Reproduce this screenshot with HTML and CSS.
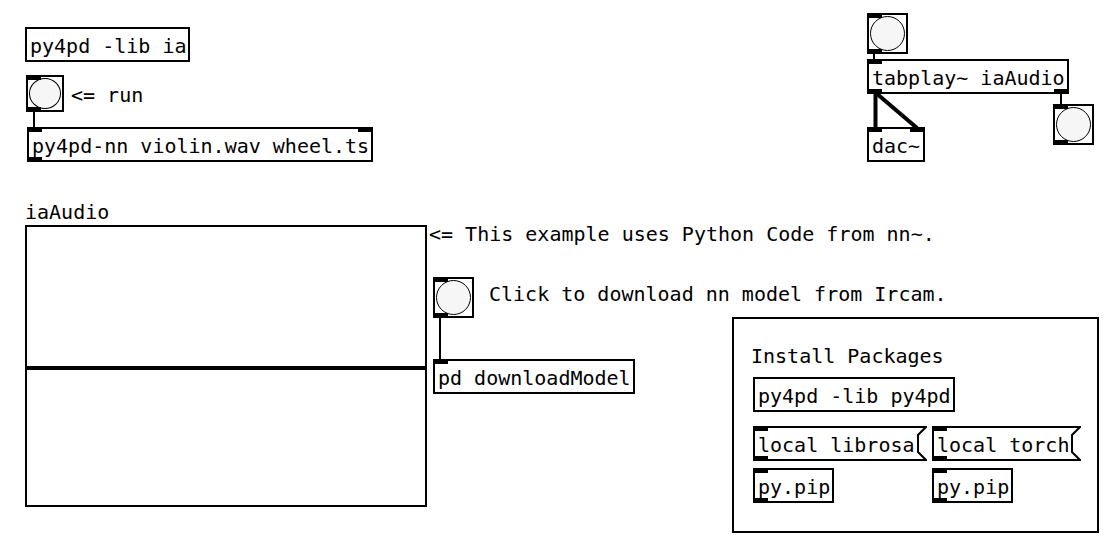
FILE: index.html
```html
<!DOCTYPE html>
<html>
<head>
<meta charset="utf-8">
<link rel="stylesheet" href="styles.css">
</head>
<body>
<div class="patch">
  <svg class="wires" width="1106" height="539" viewBox="0 0 1106 539">
    <line class="w" x1="34" y1="111" x2="34" y2="128"/>
    <line class="w" x1="440" y1="316" x2="440" y2="360"/>
    <line class="w" x1="874" y1="53" x2="874" y2="60"/>
    <line class="sig" x1="875.5" y1="92" x2="875.5" y2="128"/>
    <line class="sig" x1="876" y1="93" x2="917" y2="128"/>
    <line class="w" x1="1061" y1="92" x2="1061" y2="105"/>
    <line class="w" x1="760" y1="459" x2="760" y2="469"/>
    <line class="w" x1="939" y1="459" x2="939" y2="469"/>
  </svg>

  <div class="obj n-lib-ia">py4pd -lib ia</div>

  <div class="bng n-bng-run"><span class="io in-l"></span><span class="ball"></span><span class="io out-l"></span></div>
  <div class="cmt n-cmt-run">&lt;= run</div>

  <div class="obj n-nn"><span class="io in-l"></span><span class="io in-r"></span>py4pd-nn violin.wav wheel.ts<span class="io out-l"></span></div>

  <div class="cmt n-label">iaAudio</div>
  <div class="graph n-graph"><div class="zero"></div></div>

  <div class="cmt n-cmt-nn">&lt;= This example uses Python Code from nn~.</div>

  <div class="bng n-bng-dl"><span class="io in-l"></span><span class="ball"></span><span class="io out-l"></span></div>
  <div class="cmt n-cmt-dl">Click to download nn model from Ircam.</div>
  <div class="obj n-dl"><span class="io in-l"></span>pd downloadModel</div>

  <div class="bng n-bng-play"><span class="io in-l"></span><span class="ball"></span><span class="io out-l"></span></div>
  <div class="obj n-tabplay"><span class="io in-l"></span>tabplay~ iaAudio<span class="io out-l"></span><span class="io out-r"></span></div>
  <div class="obj n-dac"><span class="io in-l"></span><span class="io in-r"></span>dac~</div>
  <div class="bng n-bng-end"><span class="io in-l"></span><span class="ball"></span><span class="io out-l"></span></div>

  <div class="cnv n-cnv"></div>
  <div class="cmt n-cmt-install">Install Packages</div>
  <div class="obj n-lib-py4pd">py4pd -lib py4pd</div>

  <div class="msg n-msg-librosa"><svg class="flag" width="174" height="35" viewBox="0 0 174 35"><polygon points="1,1 173,1 165,9 165,26 173,34 1,34"/></svg><span class="io in-l"></span><span class="label">local librosa</span><span class="io out-l"></span></div>
  <div class="msg n-msg-torch"><svg class="flag" width="149" height="35" viewBox="0 0 149 35"><polygon points="1,1 148,1 140,9 140,26 148,34 1,34"/></svg><span class="io in-l"></span><span class="label">local torch</span><span class="io out-l"></span></div>

  <div class="obj n-pip1"><span class="io in-l"></span>py.pip<span class="io out-l"></span></div>
  <div class="obj n-pip2"><span class="io in-l"></span>py.pip<span class="io out-l"></span></div>
</div>
</body>
</html>
```

FILE: styles.css
```css
html, body {
  margin: 0;
  padding: 0;
  background: #fff;
}

.patch {
  position: relative;
  width: 1106px;
  height: 539px;
  overflow: hidden;
  background: #fff;
  font-family: "DejaVu Sans Mono", monospace;
  font-size: 20px;
  line-height: 24px;
  color: #000;
}

.wires {
  position: absolute;
  left: 0;
  top: 0;
}

.w {
  stroke: #000;
  stroke-width: 2;
}

.sig {
  stroke: #000;
  stroke-width: 4;
}

/* object box */
.obj {
  position: absolute;
  box-sizing: border-box;
  height: 35px;
  border: 2px solid #000;
  padding: 5px 0 0 3px;
  background: #fff;
  white-space: pre;
}

/* message box */
.msg {
  position: absolute;
  box-sizing: border-box;
  height: 35px;
  padding: 7px 0 0 5px;
  white-space: nowrap;
}

.msg .label {
  position: relative;
}

.flag {
  position: absolute;
  left: 0;
  top: 0;
}

.flag polygon {
  fill: #fff;
  stroke: #000;
  stroke-width: 2;
}

.msg .io.in-l { top: 0; left: 0; }
.msg .io.out-l { bottom: 0; left: 0; }

/* comments */
.cmt {
  position: absolute;
  white-space: pre;
}

/* bang */
.bng {
  position: absolute;
  box-sizing: border-box;
  border: 2px solid #000;
  padding: 1px;
  background: #fff;
  display: flex;
}

.ball {
  flex: 1;
  box-sizing: border-box;
  border: 1.5px solid #000;
  border-radius: 50%;
  background: #f6f6f6;
}

/* iolets */
.io {
  position: absolute;
  width: 15px;
  height: 5px;
  background: #000;
}

.in-l { top: -2px; left: -2px; }
.in-r { top: -2px; right: -2px; }
.out-l { bottom: -2px; left: -2px; }
.out-r { bottom: -2px; right: -2px; }

/* array graph */
.graph {
  position: absolute;
  box-sizing: border-box;
  border: 2px solid #000;
  background: #fff;
  display: flex;
  flex-direction: column;
  justify-content: flex-start;
}

.zero {
  margin-top: 139px;
  height: 4px;
  background: #000;
}

/* canvas */
.cnv {
  position: absolute;
  box-sizing: border-box;
  border: 2px solid #000;
  background: #fff;
}

/* node positions on the patch canvas */
.n-lib-ia { left: 25px; top: 27px; width: 165px; }
.n-bng-run { left: 26px; top: 75px; width: 38px; height: 37px; }
.n-cmt-run { left: 71px; top: 83px; }
.n-nn { left: 27px; top: 127px; width: 346px; }
.n-label { left: 25px; top: 200px; }
.n-graph { left: 25px; top: 225px; width: 402px; height: 282px; }
.n-cmt-nn { left: 429px; top: 222px; }
.n-bng-dl { left: 433px; top: 277px; width: 41px; height: 41px; }
.n-cmt-dl { left: 489px; top: 282px; }
.n-dl { left: 433px; top: 359px; width: 202px; }

.n-bng-play { left: 867px; top: 13px; width: 41px; height: 41px; }
.n-tabplay { left: 867px; top: 59px; width: 202px; }
.n-dac { left: 867px; top: 127px; width: 58px; }
.n-bng-end { left: 1053px; top: 104px; width: 41px; height: 41px; }

.n-cnv { left: 732px; top: 317px; width: 367px; height: 216px; }
.n-cmt-install { left: 751px; top: 344px; }
.n-lib-py4pd { left: 753px; top: 377px; width: 202px; }
.n-msg-librosa { left: 753px; top: 426px; width: 174px; }
.n-msg-torch { left: 932px; top: 426px; width: 149px; }
.n-pip1 { left: 753px; top: 468px; width: 81px; }
.n-pip2 { left: 932px; top: 468px; width: 81px; }
```
